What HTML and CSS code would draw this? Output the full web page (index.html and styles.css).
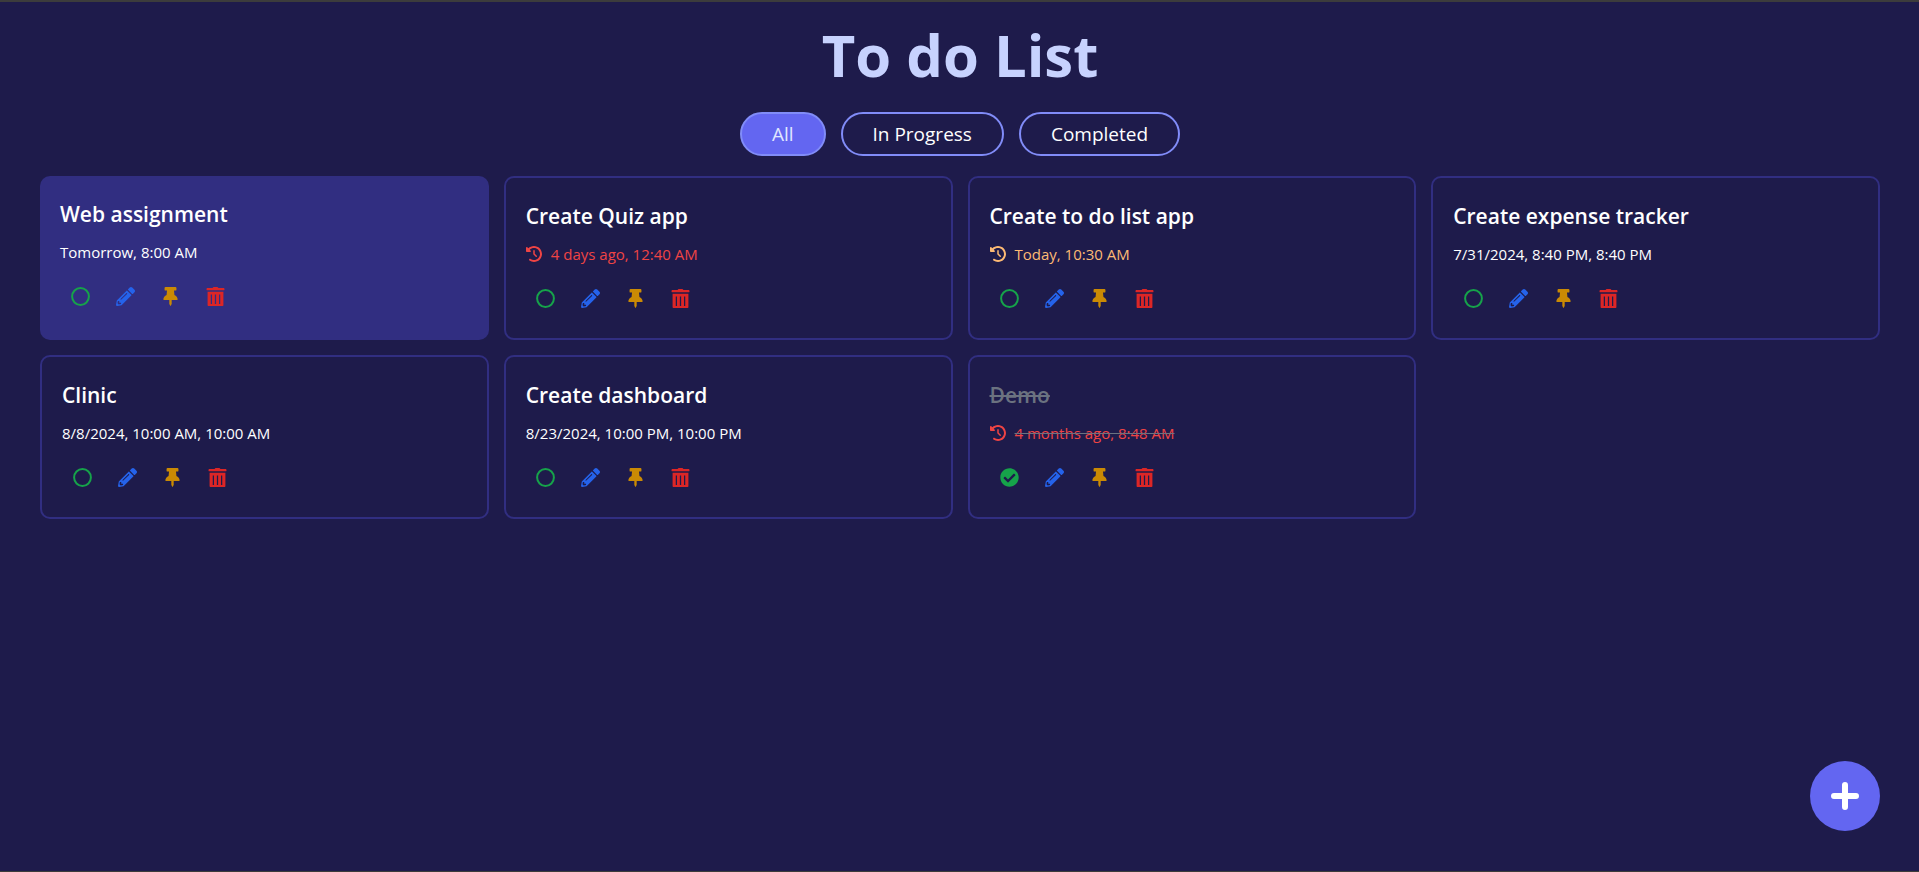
FILE: index.html
```html
<!DOCTYPE html>
<html lang="en">
<head>
<meta charset="utf-8">
<title>To do List</title>
<link rel="stylesheet" href="styles.css">
</head>
<body>
<svg class="sprite" aria-hidden="true">
  <symbol id="open" viewBox="0 0 19 19"><circle cx="9.5" cy="9.5" r="8.4" fill="none" stroke="currentColor" stroke-width="2"/></symbol>
  <symbol id="done" viewBox="0 0 512 512"><path d="M504 256c0 136.967-111.033 248-248 248S8 392.967 8 256 119.033 8 256 8s248 111.033 248 248zM227.314 387.314l184-184c6.248-6.248 6.248-16.379 0-22.627l-22.627-22.627c-6.248-6.249-16.379-6.249-22.628 0L216 308.118l-70.059-70.059c-6.248-6.248-16.379-6.248-22.628 0l-22.627 22.627c-6.248 6.248-6.248 16.379 0 22.627l104 104c6.249 6.249 16.379 6.249 22.628.001z"/></symbol>
  <symbol id="pencil" viewBox="0 0 512 512"><path d="M497.9 142.1l-46.1 46.1c-4.7 4.7-12.3 4.7-17 0l-111-111c-4.7-4.7-4.7-12.3 0-17l46.1-46.1c18.7-18.7 49.1-18.7 67.9 0l60.1 60.1c18.8 18.7 18.8 49.1 0 67.9zM284.2 99.8L21.6 362.4.4 483.9c-2.9 16.4 11.4 30.6 27.8 27.8l121.5-21.3 262.6-262.6c4.7-4.7 4.7-12.3 0-17l-111-111c-4.8-4.7-12.4-4.7-17.1 0zM124.1 339.9c-5.5-5.5-5.5-14.3 0-19.8l154-154c5.5-5.5 14.3-5.5 19.8 0s5.5 14.3 0 19.8l-154 154c-5.5 5.5-14.3 5.5-19.8 0zM88 424h48v36.3l-64.5 11.3-31.1-31.1L51.7 376H88v48z"/></symbol>
  <symbol id="pin" viewBox="0 0 384 512"><path d="M298.028 214.267L285.793 96H328c13.255 0 24-10.745 24-24V24c0-13.255-10.745-24-24-24H56C42.745 0 32 10.745 32 24v48c0 13.255 10.745 24 24 24h42.207L85.972 214.267C37.465 236.82 0 277.261 0 328c0 13.255 10.745 24 24 24h136v104.007c0 1.242.289 2.467.845 3.578l24 48c2.941 5.882 11.364 5.893 14.311 0l24-48a8.008 8.008 0 0 0 .845-3.578V352h136c13.255 0 24-10.745 24-24-.001-51.183-37.983-91.42-85.973-113.733z"/></symbol>
  <symbol id="trash" viewBox="0 0 17 18"><path fill-rule="evenodd" d="M1 1h4.600L6.200.400C6.400.150 6.700 0 7 0h3c.3 0 .6.150.8.400L11.400 1H16c.6 0 1 .4 1 1v.7c0 .2-.1.300-.3.300H.3C.1 3 0 2.900 0 2.700V2c0-.6.4-1 1-1zM1 4.500h15V17c0 .6-.4 1-1 1H2c-.6 0-1-.4-1-1zM4 7v9h1.200V7zM7.900 7v9h1.200V7zM11.800 7v9H13V7z"/></symbol>
  <symbol id="history" viewBox="0 0 512 512"><path d="M75 75L41 41C26 26 0 37 0 58v110c0 13 11 24 24 24h110c21 0 32-26 17-41l-31-31c35-35 83-56 136-56 106 0 192 86 192 192s-86 192-192 192c-41 0-78-13-109-34-15-10-35-7-45 8s-6 34 8 45c42 28 92 45 146 45 141 0 256-115 256-256S397 0 256 0C185 0 121 29 75 75zM256 128c-13 0-24 11-24 24v104c0 6 3 12 7 17l72 72c9 9 25 9 34 0s9-25 0-34l-65-65v-94c0-13-11-24-24-24z"/></symbol>
  <symbol id="plus" viewBox="0 0 28 28"><path d="M14 3v22M3 14h22" fill="none" stroke="currentColor" stroke-width="6" stroke-linecap="round"/></symbol>
</svg>
<main class="page">
  <h1 class="heading">To do List</h1>
  <nav class="filters" aria-label="Filter tasks">
    <button class="filter filter-active" type="button">All</button>
    <button class="filter" type="button">In Progress</button>
    <button class="filter" type="button">Completed</button>
  </nav>
  <section class="tasks">
    <article class="task task-pinned">
      <h2 class="task-title">Web assignment</h2>
      <p class="task-date"><span>Tomorrow, 8:00 AM</span></p>
      <div class="actions">
        <button class="action complete" type="button" aria-label="Complete"><svg><use href="#open"/></svg></button>
        <button class="action edit" type="button" aria-label="Edit"><svg><use href="#pencil"/></svg></button>
        <button class="action pin" type="button" aria-label="Pin"><svg><use href="#pin"/></svg></button>
        <button class="action delete" type="button" aria-label="Delete"><svg><use href="#trash"/></svg></button>
      </div>
    </article>
    <article class="task">
      <h2 class="task-title">Create Quiz app</h2>
      <p class="task-date overdue"><svg class="clock"><use href="#history"/></svg><span>4 days ago, 12:40 AM</span></p>
      <div class="actions">
        <button class="action complete" type="button" aria-label="Complete"><svg><use href="#open"/></svg></button>
        <button class="action edit" type="button" aria-label="Edit"><svg><use href="#pencil"/></svg></button>
        <button class="action pin" type="button" aria-label="Pin"><svg><use href="#pin"/></svg></button>
        <button class="action delete" type="button" aria-label="Delete"><svg><use href="#trash"/></svg></button>
      </div>
    </article>
    <article class="task">
      <h2 class="task-title">Create to do list app</h2>
      <p class="task-date today"><svg class="clock"><use href="#history"/></svg><span>Today, 10:30 AM</span></p>
      <div class="actions">
        <button class="action complete" type="button" aria-label="Complete"><svg><use href="#open"/></svg></button>
        <button class="action edit" type="button" aria-label="Edit"><svg><use href="#pencil"/></svg></button>
        <button class="action pin" type="button" aria-label="Pin"><svg><use href="#pin"/></svg></button>
        <button class="action delete" type="button" aria-label="Delete"><svg><use href="#trash"/></svg></button>
      </div>
    </article>
    <article class="task">
      <h2 class="task-title">Create expense tracker</h2>
      <p class="task-date"><span>7/31/2024, 8:40 PM, 8:40 PM</span></p>
      <div class="actions">
        <button class="action complete" type="button" aria-label="Complete"><svg><use href="#open"/></svg></button>
        <button class="action edit" type="button" aria-label="Edit"><svg><use href="#pencil"/></svg></button>
        <button class="action pin" type="button" aria-label="Pin"><svg><use href="#pin"/></svg></button>
        <button class="action delete" type="button" aria-label="Delete"><svg><use href="#trash"/></svg></button>
      </div>
    </article>
    <article class="task">
      <h2 class="task-title">Clinic</h2>
      <p class="task-date"><span>8/8/2024, 10:00 AM, 10:00 AM</span></p>
      <div class="actions">
        <button class="action complete" type="button" aria-label="Complete"><svg><use href="#open"/></svg></button>
        <button class="action edit" type="button" aria-label="Edit"><svg><use href="#pencil"/></svg></button>
        <button class="action pin" type="button" aria-label="Pin"><svg><use href="#pin"/></svg></button>
        <button class="action delete" type="button" aria-label="Delete"><svg><use href="#trash"/></svg></button>
      </div>
    </article>
    <article class="task">
      <h2 class="task-title">Create dashboard</h2>
      <p class="task-date"><span>8/23/2024, 10:00 PM, 10:00 PM</span></p>
      <div class="actions">
        <button class="action complete" type="button" aria-label="Complete"><svg><use href="#open"/></svg></button>
        <button class="action edit" type="button" aria-label="Edit"><svg><use href="#pencil"/></svg></button>
        <button class="action pin" type="button" aria-label="Pin"><svg><use href="#pin"/></svg></button>
        <button class="action delete" type="button" aria-label="Delete"><svg><use href="#trash"/></svg></button>
      </div>
    </article>
    <article class="task task-done">
      <h2 class="task-title">Demo</h2>
      <p class="task-date overdue"><svg class="clock"><use href="#history"/></svg><span>4 months ago, 8:48 AM</span></p>
      <div class="actions">
        <button class="action complete" type="button" aria-label="Reopen"><svg><use href="#done"/></svg></button>
        <button class="action edit" type="button" aria-label="Edit"><svg><use href="#pencil"/></svg></button>
        <button class="action pin" type="button" aria-label="Pin"><svg><use href="#pin"/></svg></button>
        <button class="action delete" type="button" aria-label="Delete"><svg><use href="#trash"/></svg></button>
      </div>
    </article>
  </section>
</main>
<button class="add" type="button" aria-label="Add task"><svg><use href="#plus"/></svg></button>
</body>
</html>
```

FILE: styles.css
```css
* { box-sizing: border-box; }
body {
  margin: 0;
  background: #1e1b4b;
  color: #fff;
  font-family: "Segoe UI", "Open Sans", "Noto Sans", sans-serif;
}
button { font: inherit; color: inherit; cursor: pointer; }
.sprite { position: absolute; width: 0; height: 0; }
.page {
  min-height: 100vh;
  padding: 23px 39px 24px 40px;
  border-top: 2px solid #3c3c3c;
  border-bottom: 1px solid #3c3c3c;
}
.heading {
  margin: 0 0 27px;
  color: #c7d2fe;
  font-size: 58px;
  font-weight: 700;
  line-height: 60px;
  text-align: center;
}
.filters {
  display: flex;
  justify-content: center;
  gap: 15px;
  margin-bottom: 20px;
}
.filter {
  padding: 6px 30px;
  border: 2px solid #818cf8;
  border-radius: 22px;
  background: transparent;
  font-size: 19px;
  line-height: 28px;
}
.filter-active { background: #6366f1; color: #e0e7ff; }
.tasks {
  display: grid;
  grid-template-columns: repeat(4, minmax(0, 1fr));
  gap: 15px;
}
.task {
  padding: 20px;
  border: 2px solid #312e81;
  border-radius: 10px;
}
.task-pinned { border: 0; background: #312e81; }
.task-title {
  margin: 0 0 8px;
  font-size: 21px;
  font-weight: 600;
  line-height: 36px;
}
.task-date {
  display: flex;
  align-items: center;
  gap: 9px;
  margin: 0 0 12px;
  font-size: 15px;
  line-height: 24px;
}
.clock { width: 16px; height: 16px; fill: currentColor; }
.overdue { color: #ef4444; }
.today { color: #fdba74; }
.task-done .task-title { color: #6b7280; text-decoration: line-through; }
.task-done .task-date span { text-decoration: line-through #6b7280; }
.actions { display: flex; gap: 5px; }
.action {
  display: grid;
  place-items: center;
  width: 40px;
  height: 40px;
  padding: 0;
  border: 0;
  background: transparent;
}
.action svg { width: 19px; height: 19px; fill: currentColor; }
.complete { color: #16a34a; }
.edit { color: #2563eb; }
.pin { color: #ca8a04; }
.delete { color: #dc2626; }
.add {
  position: fixed;
  right: 39px;
  bottom: 41px;
  display: grid;
  place-items: center;
  width: 70px;
  height: 70px;
  padding: 0;
  border: 0;
  border-radius: 50%;
  background: #6366f1;
}
.add svg { width: 28px; height: 28px; }
```
